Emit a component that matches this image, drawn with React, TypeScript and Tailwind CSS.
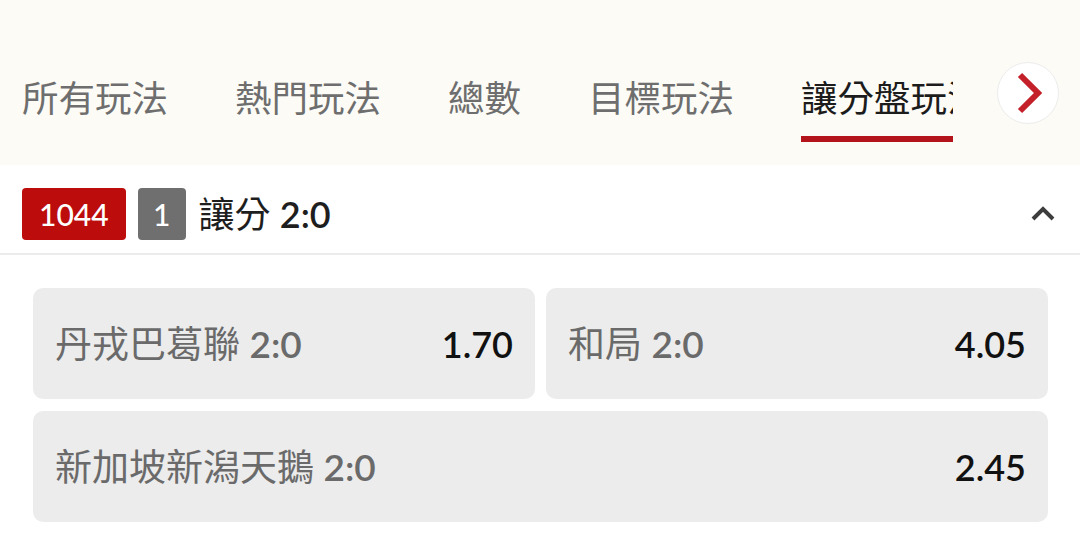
import React from 'react';

const tabs = ['所有玩法', '熱門玩法', '總數', '目標玩法', '讓分盤玩法'];
const activeTab = 4;

const font = { fontFamily: 'Lato, "Noto Sans CJK TC", sans-serif' };

function OddsCard({ name, line, odds, wide }: { name: string; line: string; odds: string; wide?: boolean }) {
  return (
    <button
      className={
        'flex h-[111px] items-center justify-between rounded-[10px] bg-[#ececec] px-[22px] text-left ' +
        (wide ? 'col-span-2' : '')
      }
    >
      <span className="text-[37px] leading-none text-[#6a6a6a]">
        {name} <span className="font-semibold">{line}</span>
      </span>
      <span className="text-[36px] font-semibold leading-none text-[#111]">{odds}</span>
    </button>
  );
}

export default function App() {
  return (
    <div className="h-[546px] w-[1080px] overflow-hidden bg-white" style={font}>
      {/* market tabs */}
      <div className="flex h-[165px] items-end bg-[#fcfbf6]">
        <div className="flex w-[953px] shrink-0 gap-[67px] overflow-hidden pl-[22px]">
          {tabs.map((t, i) => (
            <div key={t} className="flex shrink-0 flex-col">
              <span
                className={
                  'text-[36.5px] leading-[44px] whitespace-nowrap ' +
                  (i === activeTab ? 'text-[#1c1c1c]' : 'text-[#6e6e6e]')
                }
              >
                {t}
              </span>
              <div className={'mt-[16px] h-[6px] ' + (i === activeTab ? 'bg-[#b3141c]' : 'bg-transparent')} />
              <div className="h-[23px]" />
            </div>
          ))}
        </div>
        <div className="ml-[44px] self-stretch pt-[62px]">
          <div className="flex h-[62px] w-[62px] items-center justify-center rounded-full border border-[#ececec] bg-white">
            <svg width="30" height="44" viewBox="0 0 30 44" fill="none">
              <path d="M7 4 L25 22 L7 40" stroke="#c4202a" strokeWidth="6" strokeLinecap="butt" strokeLinejoin="miter" />
            </svg>
          </div>
        </div>
      </div>

      {/* market header */}
      <div className="flex items-center border-b-2 border-[#ececec] pl-[22px] pr-[24px] pt-[23px] pb-[13px]">
        <span className="flex h-[52px] items-center rounded-[4px] bg-[#bc0c0c] px-[17px] text-[30px] font-medium leading-none text-white">
          1044
        </span>
        <span className="ml-[12px] flex h-[52px] w-[48px] items-center justify-center rounded-[4px] bg-[#6f6f6f] text-[30px] font-medium leading-none text-white">
          1
        </span>
        <span className="ml-[13px] text-[36px] leading-none text-[#1e1e1e]">
          讓分 <span className="font-semibold">2:0</span>
        </span>
        <svg className="ml-auto" width="26" height="18" viewBox="0 0 26 18" fill="none">
          <path d="M3 14 L13 4 L23 14" stroke="#3d3d3d" strokeWidth="4" />
        </svg>
      </div>

      {/* selections */}
      <div className="grid grid-cols-2 gap-x-[11px] gap-y-[12px] pl-[33px] pr-[32px] pt-[33px]">
        <OddsCard name="丹戎巴葛聯" line="2:0" odds="1.70" />
        <OddsCard name="和局" line="2:0" odds="4.05" />
        <OddsCard name="新加坡新潟天鵝" line="2:0" odds="2.45" wide />
      </div>
    </div>
  );
}
